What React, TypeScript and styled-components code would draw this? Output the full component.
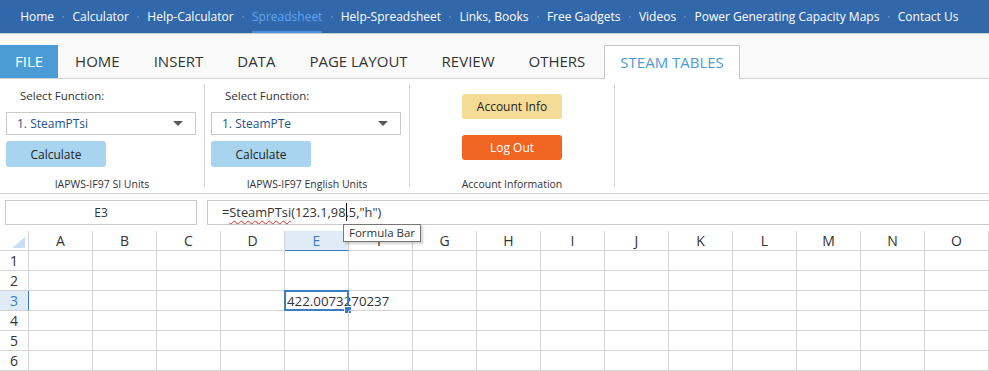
import React from "react";
import styled, { createGlobalStyle } from "styled-components";

const GlobalStyle = createGlobalStyle`
  html, body { margin: 0; padding: 0; background: #fff; }
  body {
    font-family: "Open Sans", "Noto Sans", "DejaVu Sans", sans-serif;
    color: #333;
  }
  * { box-sizing: border-box; }
`;

const Page = styled.div`
  position: relative;
  width: 989px;
  height: 371px;
  overflow: hidden;
  background: #fff;
`;

/* top site navigation */
const NavBar = styled.nav`
  height: 34px;
  background: #3168ab;
  border-bottom: 1px solid #c9ccd0;
  display: flex;
  align-items: stretch;
  padding-left: 12px;
`;

const NavItem = styled.a<{ $active?: boolean }>`
  display: flex;
  align-items: center;
  margin: 0 8.2px;
  padding-top: 2px;
  font-size: 12px;
  text-decoration: none;
  white-space: nowrap;
  color: ${(p) => (p.$active ? "#5fa6f0" : "#fff")};
  border-bottom: 2px solid ${(p) => (p.$active ? "#4a90dc" : "transparent")};
`;

const NavDot = styled.span`
  align-self: center;
  width: 2px;
  height: 2px;
  background: #5a83b6;
`;

/* ribbon tabs */
const TabBar = styled.div`
  height: 45px;
  background: #fafafa;
  border-bottom: 1px solid #cfcfcf;
  display: flex;
  align-items: flex-end;
`;

const Tab = styled.div<{ $variant?: "file" | "active" }>`
  height: ${(p) => (p.$variant === "active" ? "34px" : "33px")};
  line-height: 33px;
  padding: ${(p) => (p.$variant ? "0 15px" : "0 17px")};
  font-size: 15px;
  white-space: nowrap;
  color: ${(p) =>
    p.$variant === "file" ? "#fff" : p.$variant === "active" ? "#4a9bd6" : "#333"};
  background: ${(p) =>
    p.$variant === "file" ? "#4a9bd6" : p.$variant === "active" ? "#fff" : "transparent"};
  border: ${(p) => (p.$variant === "active" ? "1px solid #c8c8c8" : "none")};
  border-bottom: none;
  margin-left: ${(p) => (p.$variant === "active" ? "2px" : "0")};
  margin-bottom: ${(p) => (p.$variant === "active" ? "-1px" : "0")};
`;

/* ribbon content */
const Ribbon = styled.div`
  height: 115px;
  border-bottom: 1px solid #d2d2d2;
  display: flex;
  background: #fff;
`;

const Group = styled.div<{ $center?: boolean }>`
  position: relative;
  width: 205px;
  display: flex;
  flex-direction: column;
  align-items: ${(p) => (p.$center ? "center" : "flex-start")};
  padding: ${(p) => (p.$center ? "15px 1px 0 0" : "9px 1px 0 6px")};

  &::after {
    content: "";
    position: absolute;
    right: 0;
    top: 5px;
    bottom: 6px;
    width: 1px;
    background: #d4d4d4;
  }
`;

const Label = styled.div`
  font-size: 11.5px;
  line-height: 16px;
  padding-left: 14px;
  color: #333;
`;

const Select = styled.div`
  position: relative;
  margin-top: 8px;
  width: 190px;
  height: 23px;
  border: 1px solid #c9c9c9;
  padding-left: 10px;
  font-size: 12px;
  line-height: 21px;
  color: #24508e;
  background: #fff;
`;

const Caret = styled.span`
  position: absolute;
  right: 12px;
  top: 8px;
  width: 0;
  height: 0;
  border-left: 5px solid transparent;
  border-right: 5px solid transparent;
  border-top: 5px solid #595959;
`;

const Button = styled.div<{ $tone: "blue" | "yellow" | "orange"; $gap?: number }>`
  margin-top: ${(p) => p.$gap ?? 6}px;
  width: 100px;
  height: ${(p) => (p.$tone === "blue" ? "26px" : "25px")};
  border-radius: 3px;
  display: flex;
  align-items: center;
  justify-content: center;
  font-size: 12px;
  color: ${(p) => (p.$tone === "orange" ? "#fff" : "#222")};
  background: ${(p) =>
    p.$tone === "blue" ? "#a8d4ef" : p.$tone === "yellow" ? "#f5dc96" : "#f06522"};
`;

const GroupTitle = styled.div<{ $gap: number }>`
  align-self: stretch;
  margin-top: ${(p) => p.$gap}px;
  margin-left: ${(p) => (p.$gap > 12 ? "0" : "-6px")};
  text-align: center;
  font-size: 10.5px;
  line-height: 14px;
  color: #333;
`;

/* formula row */
const FormulaRow = styled.div`
  display: flex;
  gap: 10px;
  padding: 6px 0 6px 5px;
  height: 37px;
`;

const NameBox = styled.div`
  flex: 0 0 192px;
  height: 25px;
  border: 1px solid #c9c9c9;
  display: flex;
  align-items: center;
  justify-content: center;
  font-size: 12px;
  color: #333;
`;

const FormulaBox = styled.div`
  flex: 1;
  height: 25px;
  border: 1px solid #c9c9c9;
  border-right: none;
  padding: 0 0 0 14px;
  font-size: 12.8px;
  line-height: 23px;
  color: #333;
  white-space: nowrap;
`;

const Misspelled = styled.span`
  text-decoration: underline wavy #e0302a;
  text-decoration-thickness: 1px;
  text-underline-offset: 3px;
`;

const TextCursor = styled.span`
  display: inline-block;
  width: 1px;
  height: 18px;
  background: #111;
  vertical-align: -4px;
  margin-right: -1px;
`;

const Tooltip = styled.div`
  position: absolute;
  left: 343px;
  top: 224px;
  height: 18px;
  padding: 0 5px;
  border: 1px solid #767676;
  background: #fff;
  font-size: 11.5px;
  line-height: 16px;
  color: #333;
  box-shadow: 2px 2px 2px rgba(0, 0, 0, 0.18);
  z-index: 5;
`;

/* sheet grid */
const Sheet = styled.div`
  display: grid;
  grid-template-columns: 29px repeat(15, 64px);
  grid-auto-rows: 20px;
`;

const Corner = styled.div`
  border-right: 1px solid #d4d4d4;
  border-bottom: 1px solid #d4d4d4;
  display: flex;
  align-items: flex-end;
  justify-content: flex-end;
  padding: 0 3px 2px 0;
`;

const Head = styled.div<{ $sel?: boolean; $row?: boolean }>`
  display: flex;
  align-items: center;
  justify-content: center;
  font-size: 14px;
  color: ${(p) => (p.$sel ? "#3a7cc0" : "#333")};
  background: ${(p) => (p.$sel ? "#dfebf6" : "#fff")};
  border-right: 1px solid ${(p) => (p.$sel && p.$row ? "#3a7cc0" : "#d4d4d4")};
  border-bottom: 1px solid ${(p) => (p.$sel && !p.$row ? "#3a7cc0" : "#d4d4d4")};
`;

const Cell = styled.div`
  position: relative;
  border-right: 1px solid #d4d4d4;
  border-bottom: 1px solid #d4d4d4;
  padding-left: 2px;
  font-size: 13.3px;
  line-height: 20px;
  color: #333;
  white-space: nowrap;
  overflow: visible;
`;

const Selection = styled.div`
  position: absolute;
  left: -1px;
  top: -1px;
  right: -1px;
  bottom: -1px;
  border: 2px solid #3b7dc0;
  pointer-events: none;
`;

const FillHandle = styled.span`
  position: absolute;
  right: -5px;
  bottom: -5px;
  width: 6px;
  height: 6px;
  background: #3b7dc0;
  border: 1px solid #fff;
  box-sizing: content-box;
`;

const navLinks = [
  "Home",
  "Calculator",
  "Help-Calculator",
  "Spreadsheet",
  "Help-Spreadsheet",
  "Links, Books",
  "Free Gadgets",
  "Videos",
  "Power Generating Capacity Maps",
  "Contact Us",
];

const tabs = ["HOME", "INSERT", "DATA", "PAGE LAYOUT", "REVIEW", "OTHERS"];
const cols = "ABCDEFGHIJKLMNO".split("");
const rows = [1, 2, 3, 4, 5, 6];

export default function App() {
  return (
    <Page>
      <GlobalStyle />
      <NavBar>
        {navLinks.map((link, i) => (
          <React.Fragment key={link}>
            {i > 0 && <NavDot />}
            <NavItem $active={link === "Spreadsheet"}>{link}</NavItem>
          </React.Fragment>
        ))}
      </NavBar>

      <TabBar>
        <Tab $variant="file">FILE</Tab>
        {tabs.map((t) => (
          <Tab key={t}>{t}</Tab>
        ))}
        <Tab $variant="active">STEAM TABLES</Tab>
      </TabBar>

      <Ribbon>
        <Group>
          <Label>Select Function:</Label>
          <Select>
            1. SteamPTsi
            <Caret />
          </Select>
          <Button $tone="blue">Calculate</Button>
          <GroupTitle $gap={10}>IAPWS-IF97 SI Units</GroupTitle>
        </Group>
        <Group>
          <Label>Select Function:</Label>
          <Select>
            1. SteamPTe
            <Caret />
          </Select>
          <Button $tone="blue">Calculate</Button>
          <GroupTitle $gap={10}>IAPWS-IF97 English Units</GroupTitle>
        </Group>
        <Group $center>
          <Button $tone="yellow" $gap={0}>
            Account Info
          </Button>
          <Button $tone="orange" $gap={16}>
            Log Out
          </Button>
          <GroupTitle $gap={17}>Account Information</GroupTitle>
        </Group>
      </Ribbon>

      <FormulaRow>
        <NameBox>E3</NameBox>
        <FormulaBox>
          =<Misspelled>SteamPTsi</Misspelled>(123.1,98
          <TextCursor />
          .5,"h")
        </FormulaBox>
      </FormulaRow>
      <Tooltip>Formula Bar</Tooltip>

      <Sheet>
        <Corner>
          <svg width="13" height="11" viewBox="0 0 13 11">
            <polygon points="13,0 13,11 0,11" fill="#c7e0f4" />
          </svg>
        </Corner>
        {cols.map((c) => (
          <Head key={c} $sel={c === "E"}>
            {c}
          </Head>
        ))}
        {rows.map((r) => (
          <React.Fragment key={r}>
            <Head $row $sel={r === 3}>
              {r}
            </Head>
            {cols.map((c) => (
              <Cell key={c}>
                {r === 3 && c === "E" && (
                  <>
                    422.0073270237
                    <Selection>
                      <FillHandle />
                    </Selection>
                  </>
                )}
              </Cell>
            ))}
          </React.Fragment>
        ))}
      </Sheet>
    </Page>
  );
}
